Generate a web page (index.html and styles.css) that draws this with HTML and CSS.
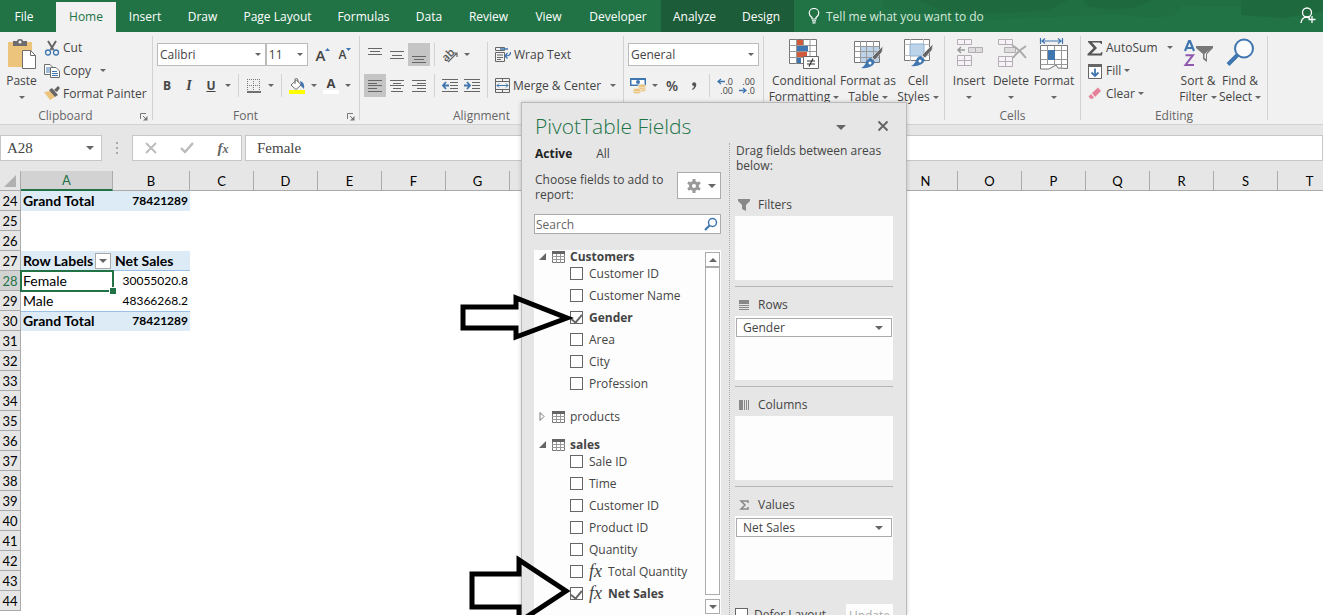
FILE: index.html
```html
<!DOCTYPE html>
<html lang="en">
<head>
    <meta charset="UTF-8">
    <meta name="viewport" content="width=device-width, initial-scale=1.0">
    <title>PivotTable Fields</title>
    <link rel="stylesheet" href="styles.css">
</head>
<body>
    <nav class="tabs">
        <svg class="tabs-art" width="440" height="32" viewBox="0 0 440 32">
            <path d="M0 0H380V3Q350 9 300 5L290 16Q262 19 232 14L150 18Q90 22 60 15L0 8Z" fill="#1f6f43"/>
            <path d="M35 0H185L165 10Q110 16 60 11Z" fill="#1f693f"/>
            <path d="M200 0H270L250 8Q220 11 205 6ZM358 0H440V12L400 18L358 15Z" fill="#1f693f"/>
        </svg>
        <button class="tab">File</button>
        <button class="tab tab-active">Home</button>
        <button class="tab">Insert</button>
        <button class="tab">Draw</button>
        <button class="tab">Page Layout</button>
        <button class="tab">Formulas</button>
        <button class="tab">Data</button>
        <button class="tab">Review</button>
        <button class="tab">View</button>
        <button class="tab">Developer</button>
        <button class="tab tab-context">Analyze</button>
        <button class="tab tab-context">Design</button>
        <button class="tell-me">
            <svg width="12" height="16" viewBox="0 0 12 16" fill="none" stroke="#fff" stroke-width="1.2">
                <path d="M4 11V9.500Q1.200 7.500 1.200 5A4.600 4.300 0 0 1 10.800 5Q10.800 7.500 8 9.500V11ZM4 12.800H8M4.500 14.800H7.500"/>
            </svg>
            Tell me what you want to do
        </button>
        <button class="share" aria-label="Share">
            <svg width="16" height="18" viewBox="0 0 16 18" fill="none" stroke="#fff" stroke-width="1.300">
                <circle cx="7" cy="5.500" r="4.500"/>
                <path d="M1 16Q1.500 11 6 10.200L10 11M12 9V16M8.500 12.500H15.500"/>
            </svg>
        </button>
    </nav>

    <header class="ribbon">
        <section class="group">
            <div class="group-body">
                <button class="big big-paste">
                    <svg width="32" height="32" viewBox="0 0 32 32">
                        <rect x="2" y="4" width="24" height="25" fill="#ecc47c"/>
                        <path d="M7 3H11Q11 1 14 1Q17 1 17 3H21V8H7Z" fill="#6d6d6d"/>
                        <circle cx="14" cy="4" r="1.500" fill="#f1f1f1"/>
                        <path d="M16.500 12.500H24.500L29.500 17.500V30.500H16.500Z" fill="#fff" stroke="#6d6d6d"/>
                        <path d="M24.500 12.500V17.500H29.500" fill="none" stroke="#6d6d6d"/>
                    </svg>
                    <span>Paste</span>
                    <span><i class="caret"></i></span>
                </button>
                <div class="stack">
                    <button class="small">
                        <svg width="16" height="16" viewBox="0 0 16 16" fill="none">
                            <path d="M4 1L9.500 10M12 1L6.500 10" stroke="#666" stroke-width="2"/>
                            <circle cx="4" cy="12.500" r="2.500" stroke="#3f76b0" stroke-width="1.300"/>
                            <circle cx="12" cy="12.500" r="2.500" stroke="#3f76b0" stroke-width="1.300"/>
                        </svg>Cut
                    </button>
                    <button class="small">
                        <svg width="16" height="16" viewBox="0 0 16 16">
                            <path d="M.5 1.500H6L8.500 4V11.500H.5Z" fill="#fff" stroke="#6d6d6d"/>
                            <path d="M2 5H6M2 7H6M2 9H6" stroke="#3f76b0"/>
                            <path d="M6.500 4.500H12L15.500 8V14.500H6.500Z" fill="#fff" stroke="#6d6d6d"/>
                            <path d="M8 8.500H13M8 10.500H14M8 12.500H14" stroke="#3f76b0"/>
                        </svg>Copy <i class="caret caret-far"></i>
                    </button>
                    <button class="small">
                        <svg width="16" height="16" viewBox="0 0 16 16">
                            <path d="M0 6L7 5L11 11L6 14Z" fill="#ecc47c"/>
                            <path d="M5 4L8 2L14 9L11 11ZM10 4L14 0L16 2L13 6Z" fill="#666"/>
                        </svg>Format Painter
                    </button>
                </div>
            </div>
            <footer class="group-name"><span>Clipboard</span>
                <button class="launcher" aria-label="Clipboard settings"><svg width="8" height="8" viewBox="0 0 8 8"><path d="M.5 6V.5H6M3 3L6 6" fill="none" stroke="#777"/><path d="M7.500 3V7.500H3Z" fill="#777"/></svg></button>
            </footer>
        </section>

        <section class="group">
            <div class="group-body rows">
                <div class="row">
                    <span class="combo combo-font"><select aria-label="Font"><option>Calibri</option></select><i class="caret"></i></span>
                    <span class="combo combo-size"><select aria-label="Font size"><option>11</option></select><i class="caret"></i></span>
                    <button class="tool tool-grow" aria-label="Increase font size"><span class="big-a">A</span><svg width="5" height="16" viewBox="0 0 5 16"><path d="M0 4L2.500 1L5 4Z" fill="#3f76b0"/></svg></button>
                    <button class="tool" aria-label="Decrease font size"><span class="small-a">A</span><svg width="5" height="16" viewBox="0 0 5 16"><path d="M0 1H5L2.500 4Z" fill="#3f76b0"/></svg></button>
                </div>
                <div class="row">
                    <button class="tool"><b>B</b></button>
                    <button class="tool"><em>I</em></button>
                    <button class="tool"><u>U</u></button>
                    <button class="drop" aria-label="Underline style"><i class="caret"></i></button>
                    <i class="sep"></i>
                    <button class="tool" aria-label="Borders"><svg width="14" height="14" viewBox="0 0 14 14" fill="none" stroke="#777" stroke-dasharray="1 1"><path d="M0 .5H14M0 6.500H14M.5 0V12M6.500 0V12M12.500 0V12"/><path d="M0 13H14" stroke="#444" stroke-width="1.500" stroke-dasharray="none"/></svg></button>
                    <button class="drop" aria-label="Border style"><i class="caret"></i></button>
                    <i class="sep"></i>
                    <button class="tool" aria-label="Fill color"><svg width="16" height="16" viewBox="0 0 16 16"><path d="M2 7L7.500 2L12 7L7 11.500Z" fill="#fff" stroke="#6d6d6d"/><path d="M6 6V1Q8-1 9 2V4" fill="none" stroke="#6d6d6d"/><path d="M11 3Q16 4 15 11L12 8Z" fill="#3f76b0"/><path d="M0 12H16V16H0Z" fill="#ff0"/></svg></button>
                    <button class="drop" aria-label="Fill colors"><i class="caret"></i></button>
                    <button class="tool" aria-label="Font color"><span class="font-color">A</span></button>
                    <button class="drop" aria-label="Font colors"><i class="caret"></i></button>
                </div>
            </div>
            <footer class="group-name"><span>Font</span>
                <button class="launcher" aria-label="Font settings"><svg width="8" height="8" viewBox="0 0 8 8"><path d="M.5 6V.5H6M3 3L6 6" fill="none" stroke="#777"/><path d="M7.500 3V7.500H3Z" fill="#777"/></svg></button>
            </footer>
        </section>

        <section class="group group-align">
            <div class="group-body">
                <div class="rows">
                    <div class="row">
                        <button class="tool" aria-label="Top align"><svg width="14" height="16" viewBox="0 0 14 16"><path d="M0 1.500H14M2 4.500H12M0 7.500H14" stroke="#666"/></svg></button>
                        <button class="tool" aria-label="Middle align"><svg width="14" height="16" viewBox="0 0 14 16"><path d="M0 4.500H14M2 8.500H12M0 11.500H14" stroke="#666"/></svg></button>
                        <button class="tool tool-on" aria-label="Bottom align"><svg width="14" height="16" viewBox="0 0 14 16"><path d="M0 9.500H14M2 12.500H12M0 15.500H14" stroke="#666"/></svg></button>
                        <i class="sep"></i>
                        <button class="tool" aria-label="Orientation"><svg width="17" height="16" viewBox="0 0 17 16"><text x="0" y="12" transform="rotate(-45 6 9)" font-size="11" font-family="Open Sans" font-weight="600" fill="#555">ab</text><path d="M6 15L15 6M11 6H15V10" fill="none" stroke="#666" stroke-width="1.200"/></svg></button>
                        <button class="drop" aria-label="Orientation options"><i class="caret"></i></button>
                    </div>
                    <div class="row">
                        <button class="tool tool-on" aria-label="Align left"><svg width="14" height="12" viewBox="0 0 14 12"><path d="M0 .5H14M0 3.500H9M0 5.500H14M0 8.500H9M0 11.500H14" stroke="#666"/></svg></button>
                        <button class="tool" aria-label="Center"><svg width="14" height="12" viewBox="0 0 14 12"><path d="M0 .5H14M3 3.500H11M0 5.500H14M3 8.500H11M1 11.500H13" stroke="#666"/></svg></button>
                        <button class="tool" aria-label="Align right"><svg width="14" height="12" viewBox="0 0 14 12"><path d="M0 .5H14M5 3.500H14M0 5.500H14M5 8.500H14M0 11.500H14" stroke="#666"/></svg></button>
                        <i class="sep"></i>
                        <button class="tool" aria-label="Decrease indent"><svg width="16" height="13" viewBox="0 0 16 13"><path d="M0 .5H16M8 3.500H16M8 6.500H16M8 9.500H16M0 12.500H16" stroke="#666"/><path d="M7 6.500H1M4 3L1 6.500L4 10" fill="none" stroke="#3f76b0" stroke-width="1.800"/></svg></button>
                        <button class="tool" aria-label="Increase indent"><svg width="16" height="13" viewBox="0 0 16 13"><path d="M0 .5H16M8 3.500H16M8 6.500H16M8 9.500H16M0 12.500H16" stroke="#666"/><path d="M0 6.500H6M3 3L6 6.500L3 10" fill="none" stroke="#3f76b0" stroke-width="1.800"/></svg></button>
                    </div>
                </div>
                <i class="sep sep-tall"></i>
                <div class="rows">
                    <button class="small">
                        <svg width="16" height="16" viewBox="0 0 16 16" fill="none" stroke="#666"><path d="M.5 .5H9.500V3.500H.5ZM.5 5.500H9.500V14.500H.5ZM2 8H8M2 10.500H8M2 12.500H6"/><path d="M5 2H13M15.500 5Q16 9 10 9M12.500 6L10 9L12.500 11.500" stroke="#3f76b0" stroke-width="1.300"/></svg>Wrap Text
                    </button>
                    <button class="small">
                        <svg width="15" height="15" viewBox="0 0 15 15" fill="none" stroke="#666"><path d="M.5 .5H14.500V14.500H.5ZM.5 3.500H14.500M.5 11.500H14.500M7.500 .5V3.500M7.500 11.500V14.500"/><path d="M2 7.500H13M4 5.500L2 7.500L4 9.500M11 5.500L13 7.500L11 9.500" stroke="#3f76b0"/></svg>Merge &amp; Center <i class="caret caret-far"></i>
                    </button>
                </div>
            </div>
            <footer class="group-name"><span>Alignment</span>
                <button class="launcher" aria-label="Alignment settings"><svg width="8" height="8" viewBox="0 0 8 8"><path d="M.5 6V.5H6M3 3L6 6" fill="none" stroke="#777"/></svg></button>
            </footer>
        </section>

        <section class="group">
            <div class="group-body rows">
                <div class="row">
                    <span class="combo combo-number"><select aria-label="Number format"><option>General</option></select><i class="caret"></i></span>
                </div>
                <div class="row">
                    <button class="tool" aria-label="Accounting format"><svg width="16" height="17" viewBox="0 0 16 17"><path d="M0 1H16V9H0Z" fill="#3f76b0"/><path d="M1.500 3H14.500V7.500H1.500Z" fill="#fff"/><circle cx="8" cy="5" r="2" fill="#3f76b0"/><g fill="#ecc47c" stroke="#f1f1f1" stroke-width=".6"><ellipse cx="12" cy="13" rx="4" ry="1.800"/><ellipse cx="12" cy="11" rx="4" ry="1.800"/><ellipse cx="12" cy="9" rx="4" ry="1.800"/><ellipse cx="7" cy="15" rx="4" ry="1.800"/><ellipse cx="7" cy="13" rx="4" ry="1.800"/></g></svg></button>
                    <button class="drop" aria-label="Currencies"><i class="caret"></i></button>
                    <button class="tool tool-percent">%</button>
                    <button class="tool" aria-label="Comma style"><svg width="6" height="10" viewBox="0 0 6 10"><path d="M1 3A2.200 2.200 0 0 1 5.300 3Q5.300 7 1.500 9L1 8Q3 7 3 5Q1 5 1 3Z" fill="#555"/></svg></button>
                    <i class="sep"></i>
                    <button class="tool tool-decimal" aria-label="Increase decimal"><svg width="8" height="7" viewBox="0 0 8 7"><path d="M8 3.500H1M4 1L1 3.500L4 6" fill="none" stroke="#3f76b0" stroke-width="1.400"/></svg>.0<br>.00</button>
                    <button class="tool tool-decimal" aria-label="Decrease decimal">.00<br><svg width="8" height="7" viewBox="0 0 8 7"><path d="M0 3.500H7M4 1L7 3.500L4 6" fill="none" stroke="#3f76b0" stroke-width="1.400"/></svg>.0</button>
                </div>
            </div>
            <footer class="group-name"><span>Number</span></footer>
        </section>

        <section class="group">
            <div class="group-body">
                <button class="big big-cond">
                    <svg width="32" height="32" viewBox="0 0 32 32">
                        <path d="M1.500 1.500H28.500V25.500H1.500Z" fill="#fff" stroke="#777"/>
                        <path d="M1.500 7.500H28.500M1.500 13.500H28.500M1.500 19.500H28.500M8.500 1V26M15.500 1V26M22 1V26" stroke="#999"/>
                        <path d="M9 2H15V7H9ZM9 14H19V19H9Z" fill="#cf5b3c"/><path d="M9 8H20V13H9ZM9 20H13V25H9Z" fill="#3f76b0"/>
                        <path d="M15.500 18.500H30.500V30.500H15.500Z" fill="#fff" stroke="#666"/><path d="M19 23H27M19 26H27M25 20.500L21 28.500" stroke="#333" stroke-width="1.200"/>
                    </svg>
                    <span>Conditional</span><span>Formatting <i class="caret"></i></span>
                </button>
                <button class="big big-table">
                    <svg width="32" height="32" viewBox="0 0 32 32">
                        <path d="M2.500 3.500H27.500V24.500H2.500Z" fill="#fff" stroke="#777"/><path d="M9 9H27V24H9Z" fill="#bcd3ea"/>
                        <path d="M2.500 8.500H27.500M2.500 13.500H27.500M2.500 19.500H27.500M8.500 3V25M14.500 3V25M21.500 3V25" stroke="#999"/>
                        <path d="M31 8L30 14L23 22L20 19Z" fill="#666" stroke="#f1f1f1" stroke-width=".6"/><path d="M19 20L23 24Q20 31 9 30Q13 28 14 24Q16 20 19 20Z" fill="#3f76b0"/><circle cx="18" cy="25" r="1.500" fill="#fff"/>
                    </svg>
                    <span>Format as</span><span>Table <i class="caret"></i></span>
                </button>
                <button class="big big-styles">
                    <svg width="32" height="32" viewBox="0 0 32 32">
                        <path d="M2.500 1.500H27.500V22.500H2.500Z" fill="#fff" stroke="#777"/><path d="M2.500 6.500H27.500M2.500 17.500H27.500M8.500 1V23M21.500 1V23" stroke="#bbb"/><path d="M8 6H22V18H8Z" fill="#bcd3ea" stroke="#8fb0d0"/>
                        <path d="M31 6L30 12L23 20L20 17Z" fill="#666" stroke="#f1f1f1" stroke-width=".6"/><path d="M19 18L23 22Q20 29 9 28Q13 26 14 22Q16 18 19 18Z" fill="#3f76b0"/><circle cx="18" cy="23" r="1.500" fill="#fff"/>
                    </svg>
                    <span>Cell</span><span>Styles <i class="caret"></i></span>
                </button>
            </div>
            <footer class="group-name"><span>Styles</span></footer>
        </section>

        <section class="group">
            <div class="group-body">
                <button class="big big-cell">
                    <svg width="32" height="32" viewBox="0 0 32 32" fill="#f7f2f7" stroke="#b4aeb4"><path d="M4.500 1.500H18.500V6.500H4.500ZM11.500 1.500V6.500M4.500 17.500H18.500V27.500H4.500ZM11.500 17.500V27.500M4.500 22.500H18.500"/><path d="M15.500 9.500H29.500V14.500H15.500ZM22.500 9.500V14.500" fill="#ddd"/><path d="M12 12H5.500M8 9L5 12L8 15" fill="none" stroke="#999" stroke-width="1.500"/></svg>
                    <span>Insert</span><span><i class="caret"></i></span>
                </button>
                <button class="big big-cell">
                    <svg width="32" height="32" viewBox="0 0 32 32" fill="#f7f2f7" stroke="#b4aeb4"><path d="M3.500 1.500H17.500V6.500H3.500ZM10.500 1.500V6.500M3.500 18.500H17.500V28.500H3.500ZM10.500 18.500V28.500M3.500 23.500H17.500"/><path d="M9.500 9.500H20.500V14.500H9.500Z" fill="#ddd"/><path d="M17 7Q25 12 31 20M31 8Q23 13 18 20" fill="none" stroke="#aaa" stroke-width="2"/></svg>
                    <span>Delete</span><span><i class="caret"></i></span>
                </button>
                <button class="big big-format">
                    <svg width="32" height="32" viewBox="0 0 32 32"><path d="M2.500 0V6M24.500 0V6M4 3H23M7 .5L4 3L7 5.500M20 .5L23 3L20 5.500" fill="none" stroke="#3f76b0" stroke-width="1.200"/><path d="M2.500 7.500H29.500V30.500L20 30L18 27L11 31H2.500Z" fill="#fff" stroke="#777"/><path d="M2.500 12.500H29.500M2.500 21.500H29.500M2.500 26.500H29.500M9.500 7.500V27M16.500 7.500V27M23.500 7.500V30" stroke="#999"/><path d="M10 12H17V22H10Z" fill="#3f76b0"/></svg>
                    <span>Format</span><span><i class="caret"></i></span>
                </button>
            </div>
            <footer class="group-name"><span>Cells</span></footer>
        </section>

        <section class="group">
            <div class="group-body">
                <div class="stack stack-edit">
                    <button class="small">
                        <svg width="16" height="16" viewBox="0 0 16 16"><path d="M1 1H15V4H14Q14 2.500 12 2.500H5L10 8L4.500 13.500H12.500Q14 13.500 14.500 12H15.500L15 15.500H.5V14L6.500 8L1 2Z" fill="#555"/></svg>AutoSum <i class="caret caret-far"></i>
                    </button>
                    <button class="small">
                        <svg width="16" height="16" viewBox="0 0 16 16"><path d="M1.500 1.500H14.500V15.500H1.500Z" fill="#fff" stroke="#666"/><path d="M1 1H15V4H1Z" fill="#666"/><path d="M8 5.500V13M4.500 9.500L8 13L11.500 9.500" fill="none" stroke="#3f76b0" stroke-width="1.800"/></svg>Fill <i class="caret"></i>
                    </button>
                    <button class="small">
                        <svg width="16" height="16" viewBox="0 0 16 16"><path d="M5 7L11 1.500L14 5L8 11Z" fill="#e5829a"/><path d="M4 8L7 11.500L5 13Q3 13 1.500 10.500Z" fill="#e5829a"/></svg>Clear <i class="caret"></i>
                    </button>
                </div>
                <button class="big big-cell">
                    <svg width="32" height="32" viewBox="0 0 32 32"><path d="M3 13L7 3H8L12 13M4.500 10H10.500" fill="none" stroke="#3f76b0" stroke-width="2.200"/><path d="M3.500 17.200H11L3.500 27H12" fill="none" stroke="#9059b0" stroke-width="2"/><path d="M14 8H31V10L25 16V24L21 21V16L14 10Z" fill="#777"/><path d="M22.500 16V20L24 21V15.500L27 12" fill="#f1f1f1"/></svg>
                    <span>Sort &amp;</span><span>Filter <i class="caret"></i></span>
                </button>
                <button class="big big-cell">
                    <svg width="32" height="32" viewBox="0 0 32 32"><circle cx="20" cy="10.500" r="9" fill="#fbfbfb" stroke="#3f76b0" stroke-width="2"/><path d="M13.500 17L4 26.500" stroke="#3f76b0" stroke-width="4"/></svg>
                    <span>Find &amp;</span><span>Select <i class="caret"></i></span>
                </button>
            </div>
            <footer class="group-name"><span>Editing</span></footer>
        </section>
    </header>

    <div class="formula-bar">
        <div class="name-box">
            <input type="text" value="A28" aria-label="Name box">
            <button class="drop" aria-label="Names"><i class="caret caret-large"></i></button>
        </div>
        <i class="dots"></i>
        <div class="formula-tools">
            <button aria-label="Cancel"><svg width="12" height="12" viewBox="0 0 12 12"><path d="M1 1L11 11M11 1L1 11" stroke="#bbb" stroke-width="1.800"/></svg></button>
            <button aria-label="Enter"><svg width="14" height="12" viewBox="0 0 14 12"><path d="M1 6L5 10L13 1" fill="none" stroke="#bbb" stroke-width="2.400"/></svg></button>
            <button class="fx">f<small>x</small></button>
        </div>
        <input class="formula" type="text" value="Female" aria-label="Formula">
    </div>

    <main class="sheet">
        <table class="grid">
            <colgroup>
                <col class="col-num"><col class="col-a"><col class="col-b"><col span="18" class="col-rest">
            </colgroup>
            <thead>
                <tr>
                    <th class="corner"><svg width="12" height="12" viewBox="0 0 12 12"><path d="M12 0V12H0Z" fill="#b1b1b1"/></svg></th>
                    <th class="picked">A</th><th>B</th><th>C</th><th>D</th><th>E</th><th>F</th><th>G</th><th>H</th><th>I</th><th>J</th><th>K</th><th>L</th><th>M</th><th>N</th><th>O</th><th>P</th><th>Q</th><th>R</th><th>S</th><th>T</th>
                </tr>
            </thead>
            <tbody>
                <tr class="total"><th>24</th><td>Grand Total</td><td class="num">78421289</td></tr>
                <tr><th>25</th></tr>
                <tr><th>26</th></tr>
                <tr class="head"><th>27</th><td><div class="row-labels">Row Labels<button class="filter" aria-label="Filter rows"><i class="caret caret-large"></i></button></div></td><td>Net Sales</td></tr>
                <tr><th class="picked">28</th><td class="selected">Female</td><td class="num">30055020.8</td></tr>
                <tr><th>29</th><td>Male</td><td class="num">48366268.2</td></tr>
                <tr class="total total-last"><th>30</th><td>Grand Total</td><td class="num">78421289</td></tr>
                <tr><th>31</th></tr>
                <tr><th>32</th></tr>
                <tr><th>33</th></tr>
                <tr><th>34</th></tr>
                <tr><th>35</th></tr>
                <tr><th>36</th></tr>
                <tr><th>37</th></tr>
                <tr><th>38</th></tr>
                <tr><th>39</th></tr>
                <tr><th>40</th></tr>
                <tr><th>41</th></tr>
                <tr><th>42</th></tr>
                <tr><th>43</th></tr>
                <tr><th>44</th></tr>
            </tbody>
        </table>
    </main>

    <aside class="pane">
        <div class="pane-top">
            <h2>PivotTable Fields</h2>
            <button class="pane-menu" aria-label="Pane options"><i class="caret caret-large"></i></button>
            <button class="pane-close" aria-label="Close"><svg width="12" height="12" viewBox="0 0 12 12"><path d="M1.500 1.500L10.500 10.500M10.500 1.500L1.500 10.500" stroke="#666" stroke-width="2"/></svg></button>
        </div>
        <div class="pane-body">
            <div class="fields">
                <div class="field-tabs">
                    <button class="field-tab field-tab-on">Active</button>
                    <button class="field-tab">All</button>
                </div>
                <div class="choose">
                    <p>Choose fields to add to report:</p>
                    <button class="gear" aria-label="Tools">
                        <svg width="14" height="14" viewBox="0 0 14 14"><circle cx="7" cy="7" r="3.500" fill="none" stroke="#999" stroke-width="3"/><path d="M7 0V3M7 11V14M1 3.500L3.500 5M10.500 9L13 10.500M1 10.500L3.500 9M10.500 5L13 3.500" stroke="#999" stroke-width="3"/></svg>
                        <i class="caret caret-large"></i>
                    </button>
                </div>
                <div class="search">
                    <input type="text" placeholder="Search" aria-label="Search fields">
                    <svg width="14" height="14" viewBox="0 0 14 14" fill="none" stroke="#3f76b0"><circle cx="8.500" cy="5.500" r="4" stroke-width="1.500"/><path d="M5.500 8.500L1 13" stroke-width="2.200"/></svg>
                </div>
                <div class="list">
                    <div class="tree">
                        <div class="table-name table-open"><svg width="9" height="9" viewBox="0 0 9 9"><path d="M8 1V8H1Z" fill="#666"/></svg><svg width="13" height="12" viewBox="0 0 13 12"><path d="M.5 .5H12.500V11.500H.5Z" fill="#fff" stroke="#777"/><path d="M0 0H13V3H0Z" fill="#666"/><path d="M0 5.500H13M0 8.500H13M4.500 3V12M8.500 3V12" stroke="#999"/></svg>Customers</div>
                        <label class="field"><input type="checkbox">Customer ID</label>
                        <label class="field"><input type="checkbox">Customer Name</label>
                        <label class="field"><input type="checkbox" checked>Gender</label>
                        <label class="field"><input type="checkbox">Area</label>
                        <label class="field"><input type="checkbox">City</label>
                        <label class="field"><input type="checkbox">Profession</label>
                        <div class="table-name"><svg width="9" height="9" viewBox="0 0 9 9"><path d="M2 .5L6 4.500L2 8.500Z" fill="#fff" stroke="#777"/></svg><svg width="13" height="12" viewBox="0 0 13 12"><path d="M.5 .5H12.500V11.500H.5Z" fill="#fff" stroke="#777"/><path d="M0 0H13V3H0Z" fill="#666"/><path d="M0 5.500H13M0 8.500H13M4.500 3V12M8.500 3V12" stroke="#999"/></svg>products</div>
                        <div class="table-name table-open"><svg width="9" height="9" viewBox="0 0 9 9"><path d="M8 1V8H1Z" fill="#666"/></svg><svg width="13" height="12" viewBox="0 0 13 12"><path d="M.5 .5H12.500V11.500H.5Z" fill="#fff" stroke="#777"/><path d="M0 0H13V3H0Z" fill="#666"/><path d="M0 5.500H13M0 8.500H13M4.500 3V12M8.500 3V12" stroke="#999"/></svg>sales</div>
                        <label class="field"><input type="checkbox">Sale ID</label>
                        <label class="field"><input type="checkbox">Time</label>
                        <label class="field"><input type="checkbox">Customer ID</label>
                        <label class="field"><input type="checkbox">Product ID</label>
                        <label class="field"><input type="checkbox">Quantity</label>
                        <label class="field"><input type="checkbox"><span class="measure">fx</span>Total Quantity</label>
                        <label class="field"><input type="checkbox" checked><span class="measure">fx</span>Net Sales</label>
                    </div>
                    <div class="scrollbar">
                        <button aria-label="Scroll up"><i class="caret caret-up"></i></button>
                        <div class="thumb"></div>
                        <button aria-label="Scroll down"><i class="caret caret-down"></i></button>
                    </div>
                </div>
            </div>

            <div class="areas">
                <p>Drag fields between areas below:</p>
                <section class="area area-first">
                    <h3><svg width="12" height="12" viewBox="0 0 12 12"><path d="M0 0H12V2L8 6V12L4 10V6L0 2Z" fill="#888"/></svg>Filters</h3>
                    <div class="drop-zone"></div>
                </section>
                <section class="area">
                    <h3><svg width="12" height="12" viewBox="0 0 12 12"><path d="M1 1H11V5H1ZM1 6H11V7H1ZM1 8H11V9H1ZM1 10H11V11H1Z" fill="#888"/></svg>Rows</h3>
                    <div class="drop-zone"><button class="pill">Gender <i class="caret caret-large"></i></button></div>
                </section>
                <section class="area">
                    <h3><svg width="12" height="12" viewBox="0 0 12 12"><path d="M1 1H5V11H1ZM6 1H7V11H6ZM8 1H9V11H8ZM10 1H11V11H10Z" fill="#888"/></svg>Columns</h3>
                    <div class="drop-zone"></div>
                </section>
                <section class="area">
                    <h3><svg width="12" height="12" viewBox="0 0 12 12"><path d="M10 4V2H3L7 6L3 10H10V8" fill="none" stroke="#888" stroke-width="1.500"/></svg>Values</h3>
                    <div class="drop-zone"><button class="pill">Net Sales <i class="caret caret-large"></i></button></div>
                </section>
                <div class="defer">
                    <label class="defer-label"><input type="checkbox">Defer Layout</label>
                    <button class="update" disabled>Update</button>
                </div>
            </div>
        </div>
    </aside>

    <!-- callout arrows -->
    <svg class="arrows" width="130" height="330" viewBox="455 290 130 330" fill="none" stroke="#000" stroke-width="5">
        <path d="M463 307H516V298L567 318L516 337V328H463Z"/>
        <path d="M472 574H519V560L566 591L519 622V607H472Z"/>
    </svg>
</body>
</html>
```
FILE: styles.css
```css
* {
    box-sizing: border-box;
}
body {
    margin: 0;
    height: 100vh;
    display: flex;
    flex-direction: column;
    overflow: hidden;
    position: relative;
    font-family: "Open Sans", sans-serif;
    font-size: 12px;
    color: #444;
    background: #fff;
}
button {
    font: inherit;
    color: inherit;
    background: none;
    border: 0;
    padding: 0;
    white-space: nowrap;
}
input, select {
    font: inherit;
    color: inherit;
}
svg {
    display: block;
    flex: none;
}

/* small triangle used by every drop-down */
.caret {
    display: inline-block;
    flex: none;
    border: 3px solid transparent;
    border-top-color: #666;
    border-bottom: 0;
    vertical-align: middle;
}
.caret-large {
    border-width: 5px 5px 0;
}
.caret-up {
    border-width: 0 4px 4px;
    border-bottom: 4px solid #666;
}
.caret-down {
    border-width: 4px 4px 0;
}
.caret-far {
    margin-left: 6px;
}

/* tab strip */
.tabs {
    flex: none;
    display: grid;
    grid-template-columns: 56px 60px 58px 57px 93px 79px 52px 67px 53px 86px 67px 66px 1fr 30px;
    height: 32px;
    position: relative;
    background: #217346;
    color: #fff;
}
.tabs-art {
    position: absolute;
    top: 0;
    right: 0;
}
.tabs-art + .tab {
    padding-right: 8px;
}
.tab-active {
    margin-top: 2px;
    padding-bottom: 2px;
    background: #f1f1f1;
    color: #217346;
}
.tab-context {
    background: #1d5c38;
}
.tell-me {
    display: flex;
    align-items: center;
    gap: 6px;
    padding-left: 14px;
    color: #d5e8dc;
    position: relative;
}
.share {
    display: grid;
    place-items: center;
    position: relative;
}

/* ribbon */
.ribbon {
    flex: none;
    display: grid;
    grid-template-columns: 153px 207px 264px 140px 181px 136px 187px 1fr;
    padding: 4px 0;
    background: #f1f1f1;
    border-bottom: 1px solid #d2d2d2;
}
.group {
    display: flex;
    flex-direction: column;
    height: 84px;
    padding: 0 3px;
    border-right: 1px solid #d2d2d2;
}
.group-align {
    padding-left: 4px;
}
.group-body {
    flex: none;
    display: flex;
    height: 72px;
}
.group-name {
    flex: none;
    display: flex;
    align-items: center;
    line-height: 16px;
    color: #666;
}
.group-name span {
    flex: 1;
    text-align: center;
}
.launcher {
    padding: 2px 1px 0 12px;
}
.stack {
    padding-left: 1px;
    display: grid;
    grid-template-rows: repeat(3, 23px);
}
.stack-edit {
    width: 93px;
    padding-left: 0;
}
.small {
    display: flex;
    align-items: center;
    gap: 3px;
    padding-left: 3px;
    height: 23px;
}
.rows {
    display: flex;
    flex-direction: column;
    gap: 8px;
    padding-top: 7px;
}
.row {
    display: flex;
    height: 23px;
}
.tool {
    width: 22px;
    height: 23px;
    display: flex;
    align-items: center;
    justify-content: center;
    flex: none;
}
.tool-on {
    background: #c5c5c5;
}
.tool-grow {
    margin-left: 4px;
}
.big-a {
    font-size: 15px;
    font-weight: 600;
}
.small-a {
    font-size: 12px;
    font-weight: 600;
}
.tool em {
    font: italic 700 14px "Liberation Serif", serif;
}
.tool u {
    font-weight: 700;
}
.tool-percent {
    font-size: 14px;
    font-weight: 600;
}
.tool-decimal {
    display: block;
    font-size: 9px;
    line-height: 9px;
    text-align: right;
    padding-right: 3px;
}
.tool-decimal svg {
    display: inline-block;
}
.font-color {
    width: 16px;
    line-height: 13px;
    font-size: 13px;
    font-weight: 700;
    border-bottom: 4px solid #fff;
}
.drop {
    width: 12px;
    display: grid;
    place-items: center;
}
.sep {
    width: 1px;
    margin: 0 4px;
    background: #d2d2d2;
}
.sep-tall {
    margin: 6px 4px 10px;
}
.combo {
    display: flex;
    align-items: center;
    padding-right: 4px;
    background: #fff;
    border: 1px solid #bbb;
}
.combo select {
    flex: 1;
    min-width: 0;
    appearance: none;
    border: 0;
    padding: 0 2px;
    background: transparent;
}
.combo-font {
    width: 111px;
    margin-left: 1px;
}
.combo-size {
    width: 43px;
}
.combo-number {
    width: 131px;
    margin-left: 1px;
}
.big {
    display: flex;
    flex-direction: column;
    align-items: center;
    padding-top: 2px;
    line-height: 16px;
}
.big svg {
    margin-bottom: 3px;
}
.big-paste {
    width: 37px;
}
.big-cond {
    width: 74px;
}
.big-table {
    width: 54px;
}
.big-styles {
    width: 46px;
}
.big-cell {
    width: 42px;
}
.big-format {
    width: 44px;
}

/* formula bar */
.formula-bar {
    flex: none;
    display: flex;
    align-items: center;
    padding: 10px 0;
    background: #e6e6e6;
    font-family: "Liberation Serif", serif;
    font-size: 15px;
}
.name-box, .formula-tools, .formula {
    height: 26px;
    background: #fff;
    border: 1px solid #c6c6c6;
}
.name-box {
    display: flex;
    width: 102px;
    padding-right: 5px;
}
.name-box .caret {
    border-width: 4px 4px 0;
}
.name-box input {
    flex: 1;
    min-width: 0;
    padding: 0 6px;
    border: 0;
}
.dots {
    width: 2px;
    height: 12px;
    margin: 0 14px;
    background: repeating-linear-gradient(#aaa 0 2px, transparent 2px 5px);
}
.formula-tools {
    display: grid;
    grid-template-columns: repeat(3, 1fr);
    width: 110px;
    margin-right: 3px;
}
.formula-tools button {
    display: grid;
    place-items: center;
}
.formula-tools .fx {
    display: block;
    font-style: italic;
    font-weight: 700;
    color: #666;
}
.fx small {
    font-size: 12px;
}
.formula {
    flex: 1;
    padding: 0 11px;
}

/* worksheet */
.sheet {
    flex: 1;
    overflow: hidden;
}
.grid {
    table-layout: fixed;
    width: 1342px;
    border-collapse: separate;
    border-spacing: 0;
    font-family: Lato, sans-serif;
    font-size: 14px;
    line-height: 18px;
    color: #000;
}
.col-num {
    width: 21px;
}
.col-a {
    width: 92px;
}
.col-b {
    width: 77px;
}
.col-rest {
    width: 64px;
}
.grid th {
    height: 20px;
    padding: 0;
    font-size: 13px;
    font-weight: 400;
    background: #e6e6e6;
    border-right: 1px solid #ababab;
    border-bottom: 1px solid #ababab;
}
.grid thead th {
    padding-top: 1px;
    line-height: 17px;
}
.grid thead .corner {
    padding: 3px 4px;
}
.grid th.picked {
    background: #d2d2d2;
    color: #217346;
}
.grid thead .picked {
    border-bottom: 2px solid #217346;
}
.grid td {
    height: 20px;
    padding: 0 2px;
    white-space: nowrap;
}
.grid .num {
    text-align: right;
    font-size: 12px;
}
.total td, .head td {
    background: #ddebf7;
    font-weight: 700;
}
.head td {
    box-shadow: inset 0 -1px #9bc2e6;
}
.total-last td {
    box-shadow: inset 0 1px #9bc2e6;
}
.row-labels {
    display: flex;
    justify-content: space-between;
    align-items: center;
    height: 19px;
}
.filter {
    width: 16px;
    height: 16px;
    display: grid;
    place-items: center;
    background: #fff;
    border: 1px solid #aaa;
}
.filter .caret {
    border-width: 4px 4px 0;
}
.grid .selected {
    position: relative;
    outline: 2px solid #217346;
    outline-offset: -1px;
}
.selected::after {
    content: "";
    position: absolute;
    right: -3px;
    bottom: -3px;
    width: 6px;
    height: 6px;
    background: #217346;
    border: solid #fff;
    border-width: 1px 0 0 1px;
}

/* floating field list */
.pane {
    position: absolute;
    top: 102px;
    bottom: 0;
    left: 521px;
    width: 386px;
    display: flex;
    flex-direction: column;
    overflow: hidden;
    padding: 0 13px 0 12px;
    background: #e6e6e6;
    border: 1px solid #bababa;
    border-bottom: 0;
    box-shadow: 0 0 4px rgba(0, 0, 0, 0.2);
}
.pane-top {
    flex: none;
    display: flex;
    align-items: center;
    height: 40px;
    padding-top: 6px;
}
.pane h2 {
    flex: 1;
    margin: 0;
    padding-left: 1px;
    font-size: 21px;
    font-weight: 300;
    color: #217346;
}
.pane-menu {
    padding-right: 31px;
}
.pane-close {
    padding-right: 4px;
}
.pane-body {
    flex: 1;
    min-height: 0;
    display: grid;
    grid-template-columns: 195px 1fr;
    grid-template-rows: minmax(0, 1fr);
}
.pane p {
    margin: 0;
    line-height: 15px;
}
.fields {
    min-height: 0;
    display: flex;
    flex-direction: column;
    padding-right: 8px;
}
.field-tabs {
    flex: none;
    display: flex;
    gap: 24px;
    padding-left: 1px;
    line-height: 22px;
}
.field-tab-on {
    font-weight: 700;
    color: #222;
}
.choose {
    flex: none;
    display: flex;
    justify-content: space-between;
    align-items: flex-start;
    gap: 8px;
    padding: 7px 0 12px 1px;
}
.gear {
    flex: none;
    display: flex;
    align-items: center;
    justify-content: space-between;
    width: 44px;
    height: 27px;
    padding: 0 4px 0 9px;
    background: #fff;
    border: 1px solid #ababab;
}
.gear .caret {
    border-width: 4px 4px 0;
}
.search {
    flex: none;
    display: flex;
    align-items: center;
    height: 20px;
    padding-right: 2px;
    background: #fff;
    border: 1px solid #ababab;
}
.search input {
    flex: 1;
    min-width: 0;
    border: 0;
    padding: 0 1px;
    background: transparent;
}
.search input::placeholder {
    color: #666;
}
.list {
    flex: 1;
    min-height: 0;
    display: flex;
    justify-content: space-between;
    margin-top: 16px;
    padding-right: 1px;
    background: #fdfdfd;
}
.tree {
    padding: 1px 0 0 4px;
}
.table-name {
    display: flex;
    align-items: center;
    gap: 5px;
    height: 11px;
    margin-top: 17px;
}
.table-name:first-child {
    margin-top: 0;
}
.table-open {
    font-weight: 700;
}
.field {
    display: flex;
    align-items: center;
    gap: 6px;
    height: 22px;
    padding-left: 32px;
}
.field:has(:checked) {
    font-weight: 700;
}
.pane [type="checkbox"] {
    appearance: none;
    flex: none;
    display: grid;
    place-items: center;
    width: 13px;
    height: 13px;
    margin: 0;
    background: #fff;
    border: 1px solid #666;
}
.pane [type="checkbox"]:checked::after {
    content: "";
    width: 5px;
    height: 9px;
    margin-bottom: 2px;
    border: solid #666;
    border-width: 0 2px 2px 0;
    transform: rotate(40deg);
}
.measure {
    font: italic 18px/18px "Liberation Serif", serif;
}
.scrollbar {
    flex: none;
    display: flex;
    flex-direction: column;
    width: 15px;
    padding: 2px 0 1px;
}
.scrollbar button {
    flex: none;
    display: grid;
    place-items: center;
    height: 15px;
    background: #fff;
    border: 1px solid #ababab;
}
.thumb {
    flex: 1;
    margin-bottom: 4px;
    background: #fff;
    border: 1px solid #ababab;
}
.areas {
    padding-left: 5px;
    border-left: 1px dotted #ababab;
}
.areas > p {
    padding-left: 1px;
}
.area {
    height: 100px;
    border-top: 1px solid #b5b5b5;
}
.area-first {
    margin-top: 13px;
    border-color: transparent;
}
.area h3 {
    display: flex;
    align-items: center;
    gap: 8px;
    height: 29px;
    margin: 0;
    padding: 6px 0 0 3px;
    font-size: 12px;
    font-weight: 400;
}
.drop-zone {
    height: 64px;
    padding: 2px 1px;
    background: #fdfdfd;
}
.pill {
    display: flex;
    align-items: center;
    justify-content: space-between;
    width: 100%;
    height: 19px;
    padding: 0 8px 0 6px;
    background: #fff;
    border: 1px solid #ababab;
}
.pill .caret {
    border-width: 4px 4px 0;
}
.defer {
    display: flex;
    justify-content: space-between;
    padding-top: 18px;
}
.defer-label {
    display: flex;
    align-items: center;
    gap: 6px;
    height: 20px;
    white-space: nowrap;
}
.update {
    width: 47px;
    height: 22px;
    background: #fdfdfd;
    color: #aaa;
}

/* drawn over the sheet and the pane */
.arrows {
    position: absolute;
    top: 290px;
    left: 455px;
    pointer-events: none;
}
```
